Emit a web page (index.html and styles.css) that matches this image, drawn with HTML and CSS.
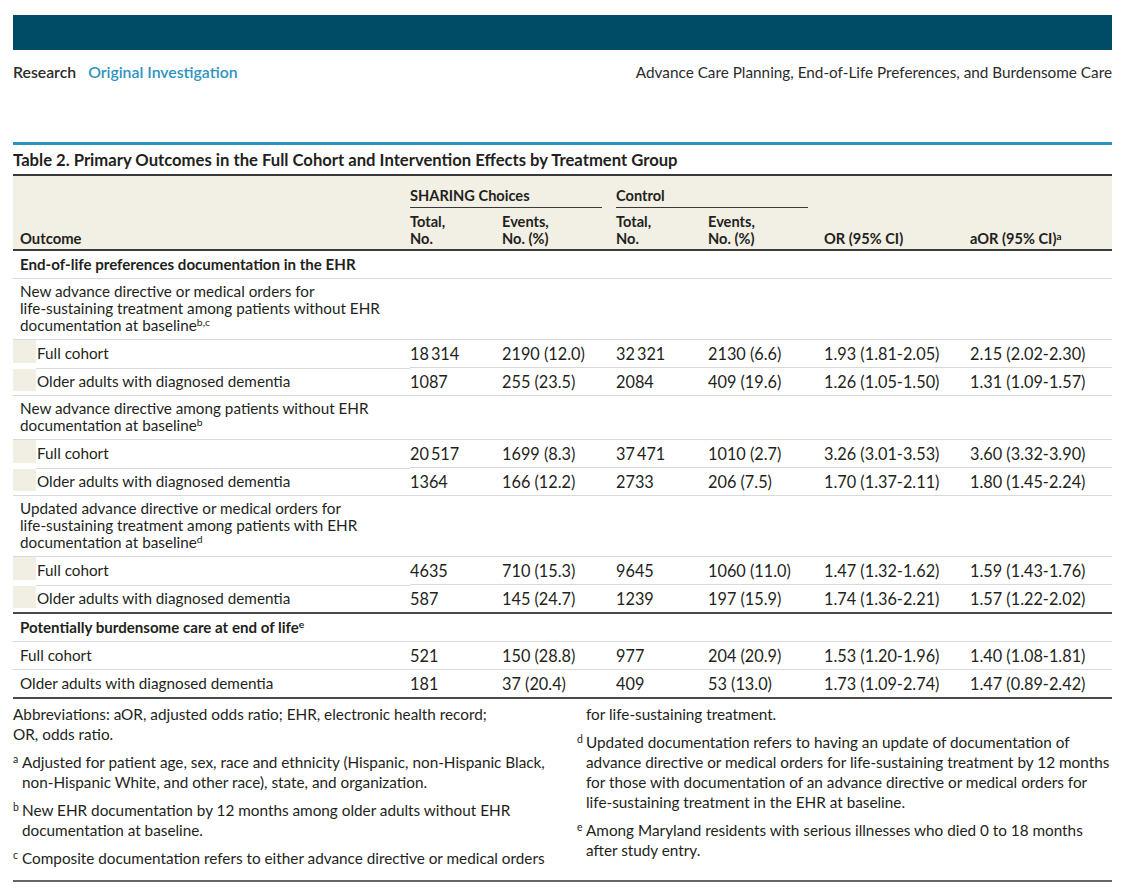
FILE: index.html
```html
<!DOCTYPE html>
<html lang="en">
<head>
<meta charset="utf-8">
<title>Table 2</title>
<link rel="stylesheet" href="styles.css">
</head>
<body>
<div class="page">
  <div class="topbar"></div>
  <div class="runhead">
    <div class="runhead-left"><span class="sec">Research</span><span class="sub">Original Investigation</span></div>
    <div class="runhead-right">Advance Care Planning, End-of-Life Preferences, and Burdensome Care</div>
  </div>
  <div class="table-block">
    <div class="caption">Table 2. Primary Outcomes in the Full Cohort and Intervention Effects by Treatment Group</div>
    <table class="data">
      <colgroup>
        <col class="c-out"><col class="c-tot"><col class="c-ev"><col class="c-tot"><col class="c-ev2"><col class="c-or"><col class="c-aor">
      </colgroup>
      <thead>
        <tr class="h1">
          <th rowspan="2" class="th-out">Outcome</th>
          <th colspan="2" class="grp"><div class="grp-label g1">SHARING Choices</div></th>
          <th colspan="2" class="grp"><div class="grp-label g2">Control</div></th>
          <th rowspan="2" class="th-bot">OR (95% CI)</th>
          <th rowspan="2" class="th-bot">aOR (95% CI)<sup>a</sup></th>
        </tr>
        <tr class="h2">
          <th>Total,<br>No.</th>
          <th>Events,<br>No. (%)</th>
          <th>Total,<br>No.</th>
          <th>Events,<br>No. (%)</th>
        </tr>
      </thead>
      <tbody>
        <tr class="head-row">
          <td colspan="7" class="bold">End-of-life preferences documentation in the EHR</td>
        </tr>
        <tr class="parent">
          <td class="out">New advance directive or medical orders for<br>life-sustaining treatment among patients without EHR<br>documentation at baseline<sup>b,c</sup></td>
          <td></td><td></td><td></td><td></td><td></td><td></td>
        </tr>
        <tr class="child first">
          <td class="out ind">Full cohort</td>
          <td>18&#8201;314</td><td>2190 (12.0)</td><td>32&#8201;321</td><td>2130 (6.6)</td><td>1.93 (1.81-2.05)</td><td>2.15 (2.02-2.30)</td>
        </tr>
        <tr class="child next">
          <td class="out ind">Older adults with diagnosed dementia</td>
          <td>1087</td><td>255 (23.5)</td><td>2084</td><td>409 (19.6)</td><td>1.26 (1.05-1.50)</td><td>1.31 (1.09-1.57)</td>
        </tr>
        <tr class="parent">
          <td class="out">New advance directive among patients without EHR<br>documentation at baseline<sup>b</sup></td>
          <td></td><td></td><td></td><td></td><td></td><td></td>
        </tr>
        <tr class="child first">
          <td class="out ind">Full cohort</td>
          <td>20&#8201;517</td><td>1699 (8.3)</td><td>37&#8201;471</td><td>1010 (2.7)</td><td>3.26 (3.01-3.53)</td><td>3.60 (3.32-3.90)</td>
        </tr>
        <tr class="child next">
          <td class="out ind">Older adults with diagnosed dementia</td>
          <td>1364</td><td>166 (12.2)</td><td>2733</td><td>206 (7.5)</td><td>1.70 (1.37-2.11)</td><td>1.80 (1.45-2.24)</td>
        </tr>
        <tr class="parent">
          <td class="out">Updated advance directive or medical orders for<br>life-sustaining treatment among patients with EHR<br>documentation at baseline<sup>d</sup></td>
          <td></td><td></td><td></td><td></td><td></td><td></td>
        </tr>
        <tr class="child first">
          <td class="out ind">Full cohort</td>
          <td>4635</td><td>710 (15.3)</td><td>9645</td><td>1060 (11.0)</td><td>1.47 (1.32-1.62)</td><td>1.59 (1.43-1.76)</td>
        </tr>
        <tr class="child next section-end">
          <td class="out ind">Older adults with diagnosed dementia</td>
          <td>587</td><td>145 (24.7)</td><td>1239</td><td>197 (15.9)</td><td>1.74 (1.36-2.21)</td><td>1.57 (1.22-2.02)</td>
        </tr>
        <tr class="head-row">
          <td colspan="7" class="bold">Potentially burdensome care at end of life<sup>e</sup></td>
        </tr>
        <tr>
          <td class="out">Full cohort</td>
          <td>521</td><td>150 (28.8)</td><td>977</td><td>204 (20.9)</td><td>1.53 (1.20-1.96)</td><td>1.40 (1.08-1.81)</td>
        </tr>
        <tr class="section-end">
          <td class="out">Older adults with diagnosed dementia</td>
          <td>181</td><td>37 (20.4)</td><td>409</td><td>53 (13.0)</td><td>1.73 (1.09-2.74)</td><td>1.47 (0.89-2.42)</td>
        </tr>
      </tbody>
    </table>
    <div class="notes">
      <div class="note-col">
        <p class="note plain">Abbreviations: aOR, adjusted odds ratio; EHR, electronic health record;<br>OR, odds ratio.</p>
        <p class="note"><sup class="mk">a</sup>Adjusted for patient age, sex, race and ethnicity (Hispanic, non-Hispanic Black,<br>non-Hispanic White, and other race), state, and organization.</p>
        <p class="note"><sup class="mk">b</sup>New EHR documentation by 12 months among older adults without EHR<br>documentation at baseline.</p>
        <p class="note"><sup class="mk">c</sup>Composite documentation refers to either advance directive or medical orders</p>
      </div>
      <div class="note-col">
        <p class="note cont">for life-sustaining treatment.</p>
        <p class="note"><sup class="mk">d</sup>Updated documentation refers to having an update of documentation of<br>advance directive or medical orders for life-sustaining treatment by 12 months<br>for those with documentation of an advance directive or medical orders for<br>life-sustaining treatment in the EHR at baseline.</p>
        <p class="note"><sup class="mk">e</sup>Among Maryland residents with serious illnesses who died 0 to 18 months<br>after study entry.</p>
      </div>
    </div>
  </div>
</div>
</body>
</html>
```

FILE: styles.css
```css
* { box-sizing: border-box; }
html, body { margin: 0; padding: 0; background: #fff; }
body {
  font-family: "Lato", "Open Sans", sans-serif;
  color: #231f20;
}
.page {
  width: 1121px;
  padding: 15px 9px 0 13px;
}
.topbar {
  height: 35px;
  background: #004b66;
}
.runhead {
  display: flex;
  justify-content: space-between;
  align-items: baseline;
  margin-top: 12px;
  line-height: 20px;
}
.runhead-left { font-size: 15.8px; }
.runhead .sec { font-weight: 600; color: #2b2b2b; margin-right: 12px; }
.runhead .sub { font-weight: 600; color: #2e93bf; }
.runhead-right { color: #2b2b2b; font-size: 15.3px; }
.table-block {
  margin-top: 60px;
  border-top: 3px solid #2a93bd;
}
.caption {
  font-weight: 700;
  font-size: 16.65px;
  line-height: 20px;
  padding: 5px 0 4px 0;
  color: #231f20;
}
table.data {
  width: 1099px;
  border-collapse: collapse;
  table-layout: fixed;
  font-size: 16.3px;
  line-height: 17px;
}
col.c-out { width: 397px; }
col.c-tot { width: 92px; }
col.c-ev { width: 114px; }
col.c-ev2 { width: 116px; }
col.c-or { width: 146px; }
col.c-aor { width: 142px; }
thead {
  background: #f2efe4;
  border-top: 2px solid #3a3a3a;
}
thead tr.h2 { border-bottom: 2px solid #3a3a3a; }
th {
  font-weight: 700;
  font-size: 14.6px;
  text-align: left;
  vertical-align: bottom;
  padding: 0 0 2px 0;
}
th.th-out { padding-left: 7px; font-size: 14.8px; }
th.grp { padding: 11px 0 0 0; vertical-align: bottom; }
.grp-label {
  border-bottom: 1px solid #3a3a3a;
  padding-bottom: 3px;
}
.grp-label.g1 { margin-right: 14px; }
.grp-label.g2 { margin-right: 16px; }
tr.h2 th { padding-top: 5px; }
sup { font-size: 0.68em; line-height: 0; vertical-align: 0.45em; }
td {
  padding: 5px 0;
  vertical-align: top;
  border-top: 1px solid #d9d9d9;
  white-space: nowrap;
}
td.out { padding-left: 7px; font-size: 15.25px; }
td.bold { font-weight: 700; padding-left: 7px; font-size: 15.1px; }
tr.head-row:first-child td { border-top: none; }
tr.parent td { padding-top: 4px; padding-bottom: 5px; }
td.ind {
  padding-left: 24px;
  background: linear-gradient(#f1eee3, #f1eee3) left top / 23px calc(100% - 4px) no-repeat;
}
tr.child.next td.ind {
  border-top-color: transparent;
  background:
    linear-gradient(#d9d9d9, #d9d9d9) 23px 0 / 100% 1px no-repeat,
    linear-gradient(#f1eee3, #f1eee3) left 1px / 23px calc(100% - 5px) no-repeat;
}
tr.section-end td { border-bottom: 2px solid #4a4a4a; }
.notes {
  display: flex;
  gap: 17px;
  padding-top: 5px;
  border-bottom: 2px solid #666;
  padding-bottom: 4px;
  font-size: 15.3px;
  line-height: 20px;
  white-space: nowrap;
}
.note-col { flex: 0 0 547px; }
.note-col + .note-col { flex: 1 1 auto; }
.note {
  margin: 0 0 8px 0;
  padding-left: 9px;
  text-indent: -9px;
}
.note.plain { padding-left: 0; text-indent: 0; }
.note.cont { padding-left: 9px; text-indent: 0; }
.note .mk {
  display: inline-block;
  width: 9px;
  text-indent: 0;
  font-size: 10.5px;
  vertical-align: 5px;
  line-height: 0;
}
```
